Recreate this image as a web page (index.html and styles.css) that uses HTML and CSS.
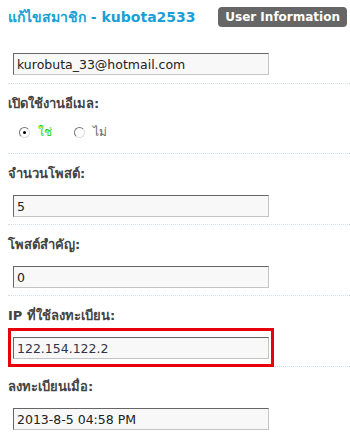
FILE: index.html
```html
<!DOCTYPE html>
<html lang="th">

<head>
  <meta charset="UTF-8">
  <meta name="viewport" content="width=device-width, initial-scale=1.0">
  <title>แก้ไขสมาชิก</title>
  <link rel="stylesheet" href="styles.css">
</head>

<body>
  <div class="page">
    <div class="head">
      <h2 class="title">แก้ไขสมาชิก - kubota2533</h2>
      <span class="badge">User Information</span>
    </div>

    <div class="field first">
      <input class="text" type="text" value="kurobuta_33@hotmail.com">
    </div>

    <div class="field">
      <label class="name">เปิดใช้งานอีเมล:</label>
      <div class="radios">
        <label class="opt yes"><input type="radio" name="mail" checked> ใช่</label>
        <label class="opt no"><input type="radio" name="mail"> ไม่</label>
      </div>
    </div>

    <div class="field">
      <label class="name">จำนวนโพสต์:</label>
      <input class="text" type="text" value="5">
    </div>

    <div class="field">
      <label class="name">โพสต์สำคัญ:</label>
      <input class="text" type="text" value="0">
    </div>

    <div class="field">
      <label class="name">IP ที่ใช้ลงทะเบียน:</label>
      <div class="mark">
        <input class="text ip" type="text" value="122.154.122.2">
      </div>
    </div>

    <div class="field">
      <label class="name">ลงทะเบียนเมื่อ:</label>
      <input class="text" type="text" value="2013-8-5 04:58 PM">
    </div>
  </div>
</body>

</html>
```

FILE: styles.css
```css
* {
  padding: 0;
  margin: 0;
  box-sizing: border-box;
}

body {
  font: 13px/1.4 Tahoma, "DejaVu Sans", "Noto Sans", sans-serif;
  color: #444;
  background: #fff;
}

.page {
  padding-left: 8px;
}

.head {
  display: flex;
  align-items: center;
  justify-content: space-between;
  padding: 7px 3px 0 0;
  height: 27px;
}

.title {
  font-size: 14px;
  font-weight: bold;
  color: #1a9fd6;
  line-height: 20px;
}

.badge {
  display: inline-block;
  height: 20px;
  line-height: 20px;
  padding: 0 7px;
  border-radius: 4px;
  background: #666;
  color: #fff;
  font-weight: bold;
  font-size: 12px;
}

.field {
  border-top: 1px dotted #d3dde6;
  padding: 11px 0 7px;
}

.field.first {
  border-top: 0;
  margin-top: 26px;
  padding: 0 0 8px;
}

.name {
  display: block;
  font-weight: bold;
  line-height: 18px;
  margin-bottom: 12px;
  color: #444;
}

.text {
  display: block;
  width: 256px;
  height: 22px;
  margin-left: 5px;
  padding: 0 3px;
  border: 1px solid;
  border-color: #666 #c4c4c4 #c4c4c4 #666;
  background: #f8f8f8;
  font: 12.5px Tahoma, "DejaVu Sans", sans-serif;
  color: #222;
  outline: none;
}

.ip {
  color: #33334d;
}

.mark {
  position: relative;
}

.mark::after {
  content: "";
  position: absolute;
  top: -9px;
  right: 76px;
  bottom: -8px;
  left: 0;
  border: 3px solid #e8000a;
}

.radios {
  display: flex;
  height: 14px;
  line-height: 14px;
  margin-bottom: 7px;
  padding-left: 11px;
  gap: 22px;
}

.opt {
  display: flex;
  align-items: center;
  gap: 8px;
  font-size: 12px;
}

.opt input {
  appearance: none;
  width: 11px;
  height: 11px;
  border-radius: 50%;
  border: 1px solid;
  border-color: #777 #ddd #ddd #777;
  background: #fff;
  position: relative;
}

.opt input:checked::after {
  content: "";
  position: absolute;
  top: 3px;
  left: 3px;
  width: 3px;
  height: 3px;
  border-radius: 50%;
  background: #000;
}

.yes {
  color: #17d417;
}

.no {
  color: #666;
}
```
